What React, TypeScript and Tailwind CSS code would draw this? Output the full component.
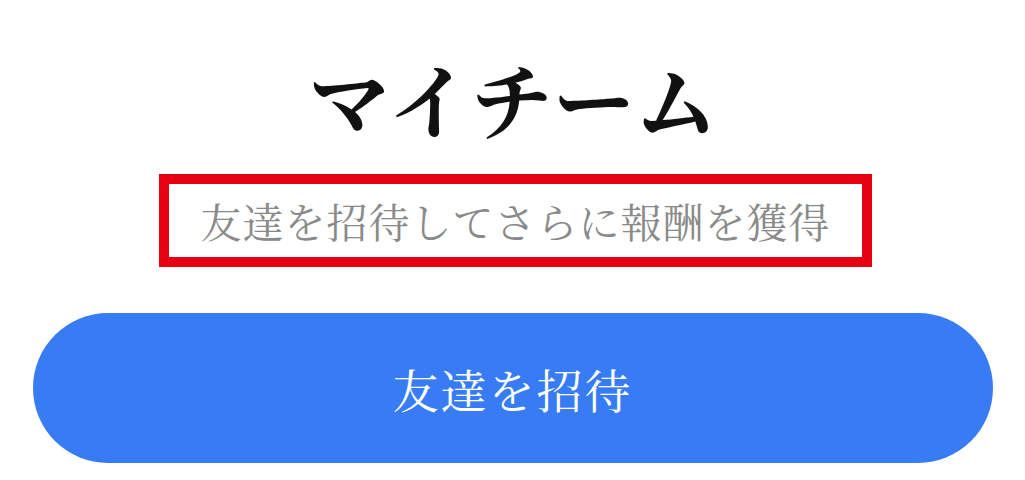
export default function App() {
  return (
    <div
      className="flex h-[480px] w-full flex-col items-center bg-white"
      style={{ fontFamily: '"Noto Serif CJK JP", "Noto Sans CJK JP", serif' }}
    >
      <h1 className="mt-[56px] h-[84px] text-[82px] font-bold leading-[84px] text-[#111]">
        マイチーム
      </h1>
      <div className="mt-[34px] ml-[6px] flex h-[93px] w-[713px] items-center justify-center border-[10px] border-[#e60012]">
        <p className="text-[41px] leading-none tracking-[1px] text-[#8a8a8a]">
          友達を招待してさらに報酬を獲得
        </p>
      </div>
      <button className="mt-[46px] flex h-[150px] w-[960px] items-center justify-center rounded-full bg-[#387cf5] text-[46px] tracking-[2px] text-white">
        友達を招待
      </button>
    </div>
  );
}
